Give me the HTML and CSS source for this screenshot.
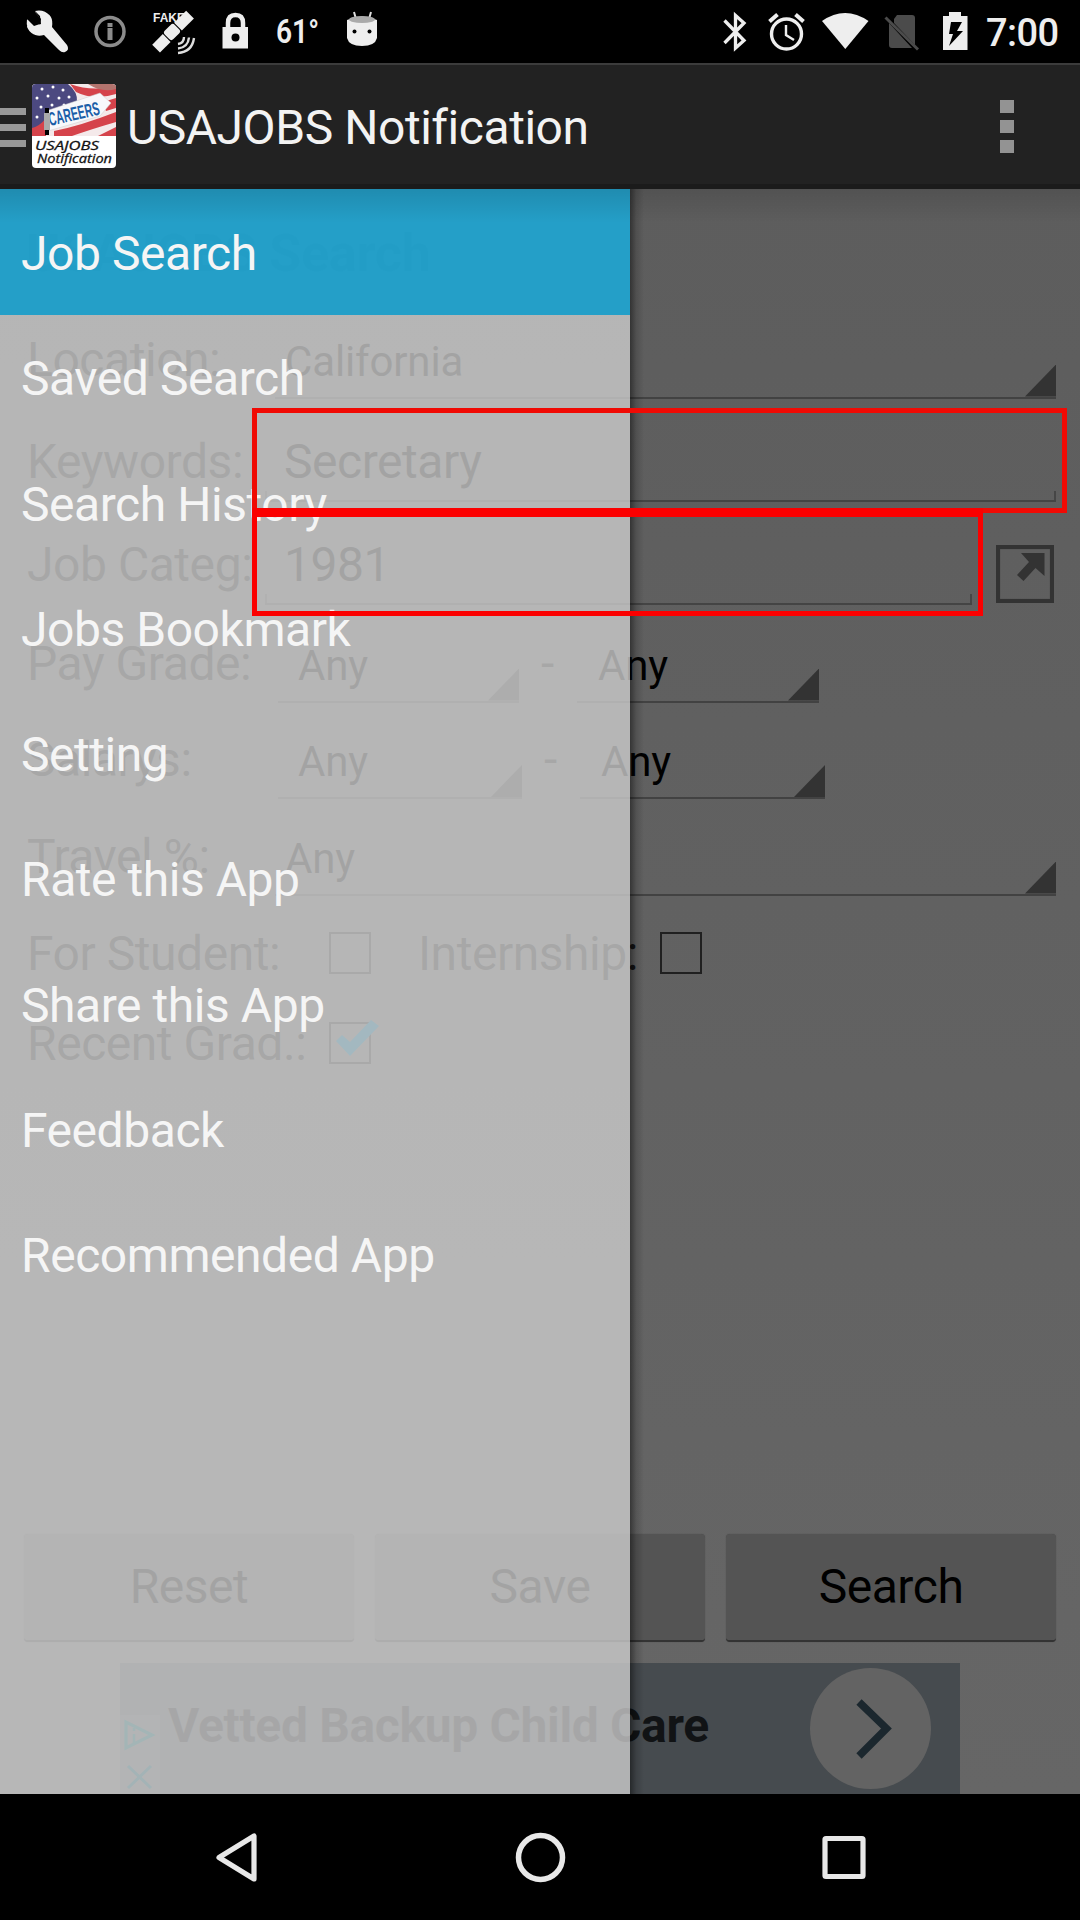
FILE: index.html
```html
<!DOCTYPE html>
<html lang="en">
<head>
<meta charset="utf-8">
<title>USAJOBS Notification</title>
<link rel="stylesheet" href="styles.css">
</head>
<body>
<header class="status">
  <div class="status-left">
    <svg class="cell" viewBox="15 0 63 63"><path d="M31 15 L40 25 L44 22 L43 12 Q54 14 52 27 L67 45 Q70 50 65 52 Q62 53 59 50 L44 35 Q32 38 27 27 L28 19 L34 26 L41 24 L40 16 L35 11 Q44 9 50 16 Q53 21 51 28 L44 35 Q34 38 28 29 Q26 24 27 19 L34 25 L40 23 L39 17 L35 12" fill="#eee" fill-rule="nonzero"/><path d="M35 12 L41 19 L40 24 L34 26 L28 20 L20 12Z" fill="#000"/></svg>
    <svg class="cell" viewBox="78 0 63 63"><circle cx="110" cy="31.500" r="14" fill="none" stroke="#8c8c8c" stroke-width="3.5"/><path d="M107.500 23h5v4h-5zM107.500 28h5V40h-5z" fill="#8c8c8c"/></svg>
    <svg class="cell" viewBox="141 0 63 63"><text x="153" y="22" class="fake">FAKE</text><g transform="rotate(-45 172 32)" fill="#eee"><rect x="149" y="27" width="15" height="11"/><rect x="165" y="26" width="14" height="12" rx="3"/><rect x="180" y="27" width="17" height="11"/></g><path d="M178 44q6-1 6-7M178 48.500q10-1 11-11M178 53q14-1 16-15" fill="none" stroke="#ddd" stroke-width="2.400"/></svg>
    <svg class="cell" viewBox="204 0 63 63"><path d="M228 28v-5q0-8 7.500-8t7.500 8v5" fill="none" stroke="#eee" stroke-width="4.500"/><path d="M222.500 27h25.500v21.500h-25.500z" fill="#eee"/><circle cx="235.500" cy="37.500" r="4" fill="#000"/></svg>
    <svg class="cell" viewBox="267 0 63 63"><text class="temp" x="276" y="43" textLength="43" lengthAdjust="spacingAndGlyphs">61°</text></svg>
    <svg class="cell" viewBox="330 0 63 63"><path d="M354 12l2 7M371 12l-2 7" stroke="#ddd" stroke-width="2"/><path d="M347 20Q362 13 377 20V38Q375 46 362 46T347 38Z" fill="#eee"/><ellipse cx="362" cy="19.500" rx="13" ry="3.500" fill="#aaa"/><circle cx="354.500" cy="31.500" r="2" fill="#000"/><circle cx="369.500" cy="31.500" r="2" fill="#000"/></svg>
  </div>
  <div class="status-right">
    <svg width="50" height="63" viewBox="711 0 50 63"><path d="M724.500 20.500L744 40.500 735.500 48V15.500L744 23 724.500 43" fill="none" stroke="#eee" stroke-width="3.300"/></svg>
    <svg width="55" height="63" viewBox="761 0 55 63"><circle cx="786.500" cy="34" r="15" fill="none" stroke="#eee" stroke-width="3.400"/><path d="M786 25v10l8 5" fill="none" stroke="#eee" stroke-width="2.400"/><path d="M769.500 21.500l8-7M803.500 21.500l-8-7" stroke="#eee" stroke-width="4"/></svg>
    <svg width="60" height="63" viewBox="816 0 60 63"><path d="M822 21Q845 5 868.500 21L845.300 49Z" fill="#eee"/></svg>
    <svg width="55" height="63" viewBox="876 0 55 63"><path d="M897 15h15q3 0 3 3V45L894 23V19ZM889 23L912 48H892q-3 0-3-3Z" fill="#4b4b4b"/><path d="M885.500 17.500L918 49.500" stroke="#4b4b4b" stroke-width="3"/></svg>
    <svg width="48" height="63" viewBox="931 0 48 63"><path d="M943 16h6v-4h12v4h6.500v34H943z" fill="#eee"/><path d="M951 22h11l-5 9h6l-14 15 4-12h-4z" fill="#000"/></svg>
    <span class="time">7:00</span>
  </div>
</header>
<div class="appbar">
  <div class="burger"><i></i><i></i><i></i></div>
  <svg class="logo" viewBox="0 0 84 84">
    <defs><clipPath id="round"><rect width="84" height="84" rx="4"/></clipPath></defs>
    <g clip-path="url(#round)">
      <rect width="84" height="84" fill="#fff"/>
      <rect width="84" height="52" fill="#f4e9ea"/>
      <path d="M38 0Q60 8 84 2V10Q62 17 44 8ZM70 18Q78 16 84 14V24L74 27ZM22 47Q48 42 84 28V38Q60 45 40 52H22ZM66 52L84 43V52ZM0 42L14 34V52H0Z" fill="#d5434b"/>
      <path d="M56 0H84V5Q70 9 56 0Z" fill="#b3746e"/>
      <path d="M0 0H36Q46 8 45 18L14 34Q8 42 0 44Z" fill="#4c4980"/>
      <g fill="#fff"><circle cx="10" cy="5" r="1.500"/><circle cx="21" cy="3" r="1.500"/><circle cx="31" cy="6" r="1.500"/><circle cx="5" cy="14" r="1.500"/><circle cx="16" cy="12" r="1.500"/><circle cx="27" cy="14" r="1.500"/><circle cx="37" cy="13" r="1.500"/><circle cx="9" cy="23" r="1.500"/><circle cx="20" cy="21" r="1.500"/><circle cx="32" cy="21" r="1.500"/><circle cx="5" cy="33" r="1.500"/></g>
      <path d="M14 27L68 9 79 19 68 32 16 47Z" fill="#f8f8fb" stroke="#ccc" stroke-width=".5"/>
      <text class="careers" transform="translate(18 42) rotate(-13)" textLength="52" lengthAdjust="spacingAndGlyphs">CAREERS</text>
      <path d="M12 29h6v17h-6z" fill="#aaa"/><path d="M13 24h4v5h-4zM13 46h4v5h-4z" fill="#000"/>
      <text class="brand" x="3" y="66" textLength="64" lengthAdjust="spacingAndGlyphs">USAJOBS</text>
      <text class="brand" x="5" y="79" textLength="75" lengthAdjust="spacingAndGlyphs">Notification</text>
    </g>
  </svg>
  <h1>USAJOBS Notification</h1>
  <div class="overflow"><i></i><i></i><i></i></div>
</div>

<main class="screen">
  <form class="form">
    <h2>USAJOBS Search</h2>
    <div class="row h-location"><label>Location:</label><span class="spinner wide">California</span></div>
    <div class="row h-keywords"><label>Keywords:</label><span class="input">Secretary</span></div>
    <div class="row h-categ"><label>Job Categ:</label><span class="input short">1981</span>
      <svg class="open" viewBox="0 0 58 58"><rect x="2" y="2" width="54" height="54" fill="none" stroke="#333" stroke-width="4.200"/><path d="M25 8H48.500V31L39.500 23 27.500 36 21 30 33 17Z" fill="#333"/></svg></div>
    <div class="row h-pay"><label>Pay Grade:</label><span class="spinner pay">Any</span><b class="dash">-</b><span class="spinner pay2">Any</span></div>
    <div class="row h-salary"><label>Salarys:</label><span class="spinner sal">Any</span><b class="dash">-</b><span class="spinner sal2">Any</span></div>
    <div class="row h-travel"><label>Travel %:</label><span class="spinner wide">Any</span></div>
    <div class="row h-student"><label class="wide-label">For Student:</label><i class="box"></i><label class="intern">Internship:</label><i class="box"></i></div>
    <div class="row h-recent"><label class="wide-label">Recent Grad.:</label><i class="box"><svg viewBox="0 0 54 44"><path d="M7 20L13 14 21 21 42 -1 50 5 21 35Z" fill="#006a90"/></svg></i></div>
    <div class="buttons"><span>Reset</span><span>Save</span><span>Search</span></div>
    <div class="ad">
      <svg class="choices" viewBox="0 0 40 79"><rect width="40" height="79" fill="#53585a"/><path d="M6 7v26L32 20Z" fill="none" stroke="#005a62" stroke-width="3.200"/><path d="M14 19v9M14 13v3" stroke="#005a62" stroke-width="2.500"/><path d="M8 51l23 22M31 51L8 73" stroke="#005062" stroke-width="3"/></svg>
      <strong>Vetted Backup Child Care</strong>
      <svg class="go" viewBox="0 0 121 121"><circle cx="60.500" cy="60.500" r="60.500" fill="#636363"/><path d="M49 34L76.500 60.500 49 88" fill="none" stroke="#1b272e" stroke-width="7.500"/></svg>
    </div>
  </form>
  <nav class="drawer">
    <a class="on">Job Search</a><a>Saved Search</a><a>Search History</a><a>Jobs Bookmark</a><a>Setting</a><a>Rate this App</a><a>Share this App</a><a>Feedback</a><a>Recommended App</a>
  </nav>
  <div class="topshade"></div>
  <div class="mark mark-keywords"></div>
  <div class="mark mark-categ"></div>
</main>

<footer class="navbar">
  <svg viewBox="0 0 60 60"><path d="M48 9V52L13 30.500Z" fill="none" stroke="#e8e8e8" stroke-width="5.200" stroke-linejoin="round"/></svg>
  <svg viewBox="0 0 60 60"><circle cx="30.500" cy="30.500" r="22" fill="none" stroke="#e8e8e8" stroke-width="5.500"/></svg>
  <svg viewBox="0 0 60 60"><rect x="11" y="11.500" width="38" height="38" rx="1" fill="none" stroke="#e8e8e8" stroke-width="5.200" stroke-linejoin="round"/></svg>
</footer>
</body>
</html>
```
FILE: styles.css
```css
* { box-sizing: border-box; }
body {
  margin: 0; width: 1080px; height: 1920px; overflow: hidden;
  display: flex; flex-direction: column; background: #000;
  font: 48px/56px Roboto, "Noto Sans", sans-serif; letter-spacing: -.45px; color: #000;
}
svg { display: block; letter-spacing: 0; }
i { display: block; font-style: normal; }

.status { height: 63px; display: flex; justify-content: space-between; color: #eee; }
.status-left { display: flex; padding-left: 15px; }
.status-right { display: flex; width: 369px; }
.cell { width: 63px; height: 63px; }
.temp { font: 600 33px Roboto, sans-serif; fill: #eee; }
.fake { font: bold 12px "Liberation Sans", sans-serif; fill: #eee; }
.time { font-size: 38px; font-weight: 500; line-height: 66px; padding-left: 7px; letter-spacing: -.6px; }

.appbar {
  height: 126px; display: flex; align-items: center; background: #222;
  border-top: 2px solid #3c3c3c; border-bottom: 5px solid #1b1b1b; color: #f3f3f3;
}
.burger { width: 26px; height: 39px; display: flex; flex-direction: column; justify-content: space-between; margin-right: 6px; margin-top: 6px; }
.burger i { height: 7px; background: #999; }
.logo { width: 84px; height: 84px; margin-top: 2px; }
.careers { font: bold 19px "Liberation Sans", sans-serif; fill: #1b5ea8; }
.brand { font: italic 13px "Open Sans", sans-serif; fill: #111; stroke: #111; stroke-width: .3px; }
.appbar h1 { margin: 6px 0 0 11px; font-size: 48px; font-weight: 400; flex: 1; }
.overflow { height: 53px; width: 14px; margin: 4px 66px 0 0; display: flex; flex-direction: column; justify-content: space-between; }
.overflow i { height: 13px; background: #939393; }

.screen { position: relative; height: 1605px; background: linear-gradient(#5d5d5d, #666); overflow: hidden; }
.form { display: flex; flex-direction: column; height: 1605px; }
.form h2 { margin: 0; height: 142.600px; padding: 35.600px 0 0 26px; font-size: 52.500px; font-weight: 700; color: #141414; }
.row { display: flex; align-items: baseline; padding-left: 27px; }
.row label { width: 248px; color: #141414; white-space: nowrap; flex: none; }
.h-location { height: 102.400px; }
.h-keywords { height: 103px; }
.h-categ { height: 98.600px; }
.h-pay { height: 96.300px; }
.h-salary { height: 96.700px; }
.h-travel { height: 97px; }
.h-student { height: 90.600px; }
.h-recent { height: 90px; }

.spinner {
  position: relative; font-size: 42px; height: 65px; padding-left: 20px; flex: none;
  letter-spacing: -.15px; border-bottom: 2px solid #424242;
}
.spinner::after {
  content: ""; position: absolute; right: 0; bottom: 0; width: 31px; height: 32px;
  background: #333; clip-path: polygon(100% 0, 100% 100%, 0 100%);
}
.wide { width: 781px; padding-left: 10px; }
.pay { width: 241px; margin-left: 3px; }
.pay2 { width: 242px; padding-left: 21px; }
.sal { width: 244px; margin-left: 3px; }
.sal2 { width: 245px; padding-left: 21px; }
.dash { font-weight: 400; width: 58px; padding-left: 22px; color: #141414; }
.input { position: relative; width: 791px; height: 68px; margin-left: -10px; padding-left: 19px; border-bottom: 2px solid #444; flex: none; }
.input::after { content: ""; position: absolute; inset: auto 0 0 0; height: 9px; border: solid #464646; border-width: 0 2px; }
.input.short { width: 707px; }
.open { width: 58px; height: 58px; margin-left: 24px; align-self: flex-start; margin-top: 8px; }
.row .wide-label { width: 302px; }
.box { width: 42px; height: 42px; border: 2px solid #202020; align-self: flex-start; margin-top: 6px; flex: none; }
.box svg { width: 54px; height: 44px; margin: -3px 0 0 -2px; overflow: visible; }
.row .intern { width: 242px; margin-left: 47px; }

.buttons { margin-top: auto; display: grid; grid-template-columns: repeat(3, 330px); gap: 21px; padding-left: 24px; height: 104px; }
.buttons span { background: #545454; border-radius: 4px; border-bottom: 2px solid #333; text-align: center; line-height: 106px; box-shadow: 0 0 1px #444; }
.ad { height: 131px; width: 840px; margin: 25px 0 0 120px; background: #464b4f; display: flex; align-items: center; overflow: hidden; }
.choices { width: 40px; height: 79px; align-self: flex-end; flex: none; }
.ad strong { margin: -6px 0 0 8px; color: #111315; width: 582px; white-space: nowrap; letter-spacing: -.35px; }
.go { width: 121px; height: 121px; margin-left: 60px; }

.drawer {
  position: absolute; left: 0; top: 0; width: 630px; height: 1605px;
  background: rgba(204, 204, 204, .8); display: flex; flex-direction: column; color: #f5f5f5;
}
.drawer::after {
  content: ""; position: absolute; left: 630px; top: 0; width: 14px; height: 100%;
  background: linear-gradient(90deg, rgba(0,0,0,.45), rgba(0,0,0,.15) 45%, transparent);
}
.drawer a { height: 125.250px; line-height: 130px; padding-left: 21px; flex: none; }
.drawer .on { height: 126px; margin-bottom: -.750px; background: rgba(20, 156, 202, .9); }
.topshade { position: absolute; left: 0; top: 0; width: 100%; height: 34px; background: linear-gradient(rgba(0,0,0,.12), transparent); }
.mark { position: absolute; left: 252px; border: 5px solid #f00a04; }
.mark-keywords { top: 219px; width: 815px; height: 105px; }
.mark-categ { top: 319px; width: 731px; height: 108px; border-color: #fb0000; border-top-width: 9px; }

.navbar { height: 126px; display: flex; justify-content: center; align-items: center; gap: 244px; }
.navbar svg { width: 60px; height: 60px; }
```
